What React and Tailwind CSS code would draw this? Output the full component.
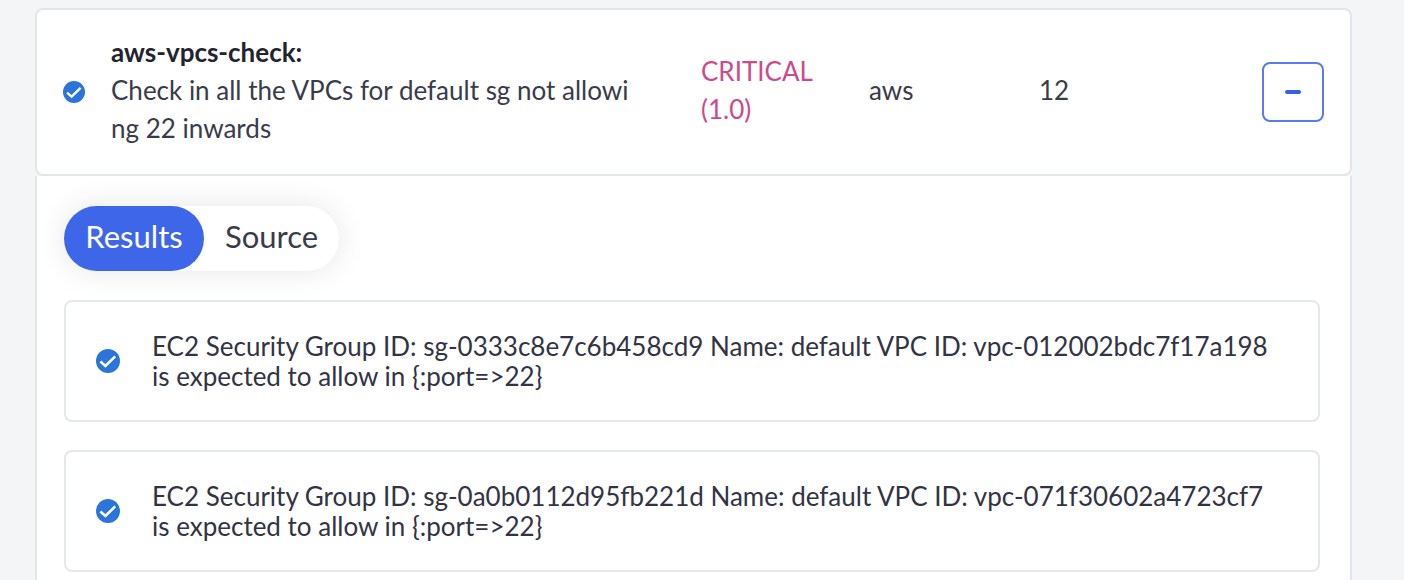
import { useState } from "react";

function CheckBadge({ className }) {
  return (
    <svg viewBox="0 0 24 24" className={className} role="img" aria-label="Passed">
      <circle cx="12" cy="12" r="12" fill="#2b74d9" />
      <path d="M4.4 12.6 L9.4 17 L19.2 7.4" fill="none" stroke="#fff" strokeWidth="2.6" />
    </svg>
  );
}

const results = [
  "EC2 Security Group ID: sg-0333c8e7c6b458cd9 Name: default VPC ID: vpc-012002bdc7f17a198 is expected to allow in {:port=>22}",
  "EC2 Security Group ID: sg-0a0b0112d95fb221d Name: default VPC ID: vpc-071f30602a4723cf7 is expected to allow in {:port=>22}",
];

const tabs = ["Results", "Source"];

export default function App() {
  const [tab, setTab] = useState("Results");

  return (
    <main className="flex min-h-screen flex-col bg-[#f4f5f7] pt-2 pr-[52px] pl-[35px] font-['Lato',sans-serif] text-[26px] text-[#3a3b49]">
      <header className="grid grid-cols-[48px_590fr_168fr_170fr_223fr_62px] items-center rounded-lg border-2 border-[#e3e6e8] bg-white py-[23px] pr-[26px] pl-[26px] leading-[38px]">
        <CheckBadge className="size-[22px]" />
        <div className="pb-1">
          <h2 className="font-bold text-[#22232f]">aws-vpcs-check:</h2>
          <p>
            Check in all the VPCs for default sg not allowi
            <br />
            ng 22 inwards
          </p>
        </div>
        <p className="pb-1 text-[#cc4a8b]">
          CRITICAL
          <br />
          (1.0)
        </p>
        <p className="pb-1">aws</p>
        <p className="pb-1">12</p>
        <button
          type="button"
          aria-label="Collapse"
          className="flex h-[60px] items-center justify-center rounded-lg border-2 border-[#587bf0] bg-white"
        >
          <span className="h-1 w-4 rounded-sm bg-[#3360e8]" />
        </button>
      </header>
      <section className="flex-1 border-x-2 border-[#e3e6e8] bg-white pt-[30px] pr-[30px] pl-[27px]">
        <div role="tablist" className="inline-flex rounded-full bg-white align-top shadow-[0_0_30px_rgba(0,0,0,0.1)]">
          {tabs.map((name) => (
            <button
              key={name}
              type="button"
              role="tab"
              aria-selected={tab === name}
              onClick={() => setTab(name)}
              className={
                tab === name
                  ? "h-[65px] w-[140px] rounded-full bg-[#3e66e9] pb-1 text-[31px] text-white"
                  : "h-[65px] w-[135px] rounded-full pb-1 text-[31px]"
              }
            >
              {name}
            </button>
          ))}
        </div>
        <ul className="mt-[29px] flex flex-col gap-7">
          {results.map((text) => (
            <li
              key={text}
              className="flex items-center gap-8 rounded-lg border-2 border-[#e4e8e8] py-[29px] pr-8 pl-[30px] leading-[30px] text-[#323343]"
            >
              <CheckBadge className="size-6 shrink-0" />
              <p>{text}</p>
            </li>
          ))}
        </ul>
      </section>
    </main>
  );
}
